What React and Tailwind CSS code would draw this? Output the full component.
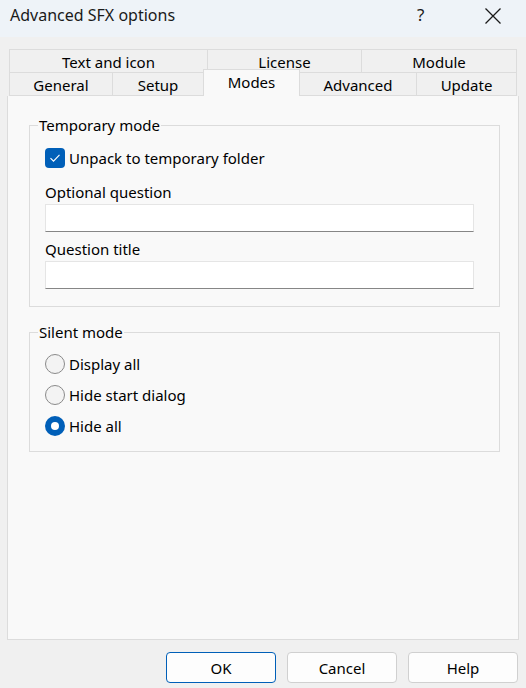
import React from 'react';

const font = { fontFamily: '"Noto Sans", "Open Sans", sans-serif' };

const Tab = ({ label, w, active }) => (
  <div
    className={`flex items-center justify-center border border-[#dcdcdc] -ml-[1px] first:ml-0 ${
      active
        ? 'relative z-10 h-[27px] -mt-[2px] bg-[#f9f9f9] border-b-0 pb-[2px]'
        : 'h-[24px] bg-[#f0f0f0] pt-[1px]'
    } ${w}`}
  >
    {label}
  </div>
);

const Radio = ({ label, checked }) => (
  <div className="flex items-center h-[20px] gap-[4px]">
    {checked ? (
      <span className="w-[20px] h-[20px] rounded-full bg-[#005fb8] flex items-center justify-center">
        <span className="w-[8px] h-[8px] rounded-full bg-white" />
      </span>
    ) : (
      <span className="w-[20px] h-[20px] rounded-full border border-[#8a8a8a] bg-[#f3f3f3]" />
    )}
    <span>{label}</span>
  </div>
);

const Field = () => (
  <div className="h-[28px] w-[429px] bg-white border border-[#e5e5e5] border-b-[#868686]" />
);

export default function App() {
  return (
    <div style={font} className="w-[526px] h-[688px] bg-[#f0f0f0] flex flex-col text-[15px] leading-[20px] text-black overflow-hidden">
      {/* title bar */}
      <div className="h-[37px] bg-[#eef3f8] flex items-start pt-[4px] pl-[10px] text-[16px] leading-[22px] text-[#1a1a1a]">
        <span className="flex-1">Advanced SFX options</span>
        <span className="w-[12px] mr-[55px] text-[17px]">?</span>
        <svg width="18" height="18" viewBox="0 0 18 18" className="mr-[24px] mt-[3px]">
          <path d="M1.5 1.5 L16.5 16.5 M16.5 1.5 L1.5 16.5" stroke="#1a1a1a" strokeWidth="1.3" fill="none" />
        </svg>
      </div>

      {/* tabs */}
      <div className="mt-[12px] pl-[9px] flex flex-col">
        <div className="flex">
          <Tab label="Text and icon" w="w-[199px]" />
          <Tab label="License" w="w-[155px]" />
          <Tab label="Module" w="w-[156px]" />
        </div>
        <div className="flex items-end h-[24px] -mt-[1px]">
          <Tab label="General" w="w-[104px]" />
          <Tab label="Setup" w="w-[92px]" />
          <Tab label="Modes" w="w-[97px]" active />
          <Tab label="Advanced" w="w-[118px]" />
          <Tab label="Update" w="w-[101px]" />
        </div>
      </div>

      {/* panel */}
      <div className="ml-[7px] w-[512px] h-[544px] bg-[#f9f9f9] border border-[#dcdcdc] border-t-0 pt-[19px] pl-[21px]">
        <fieldset className="w-[471px] h-[192px] border border-[#dcdcdc] pl-[15px] pt-0">
          <legend className="ml-[-7px] px-[1px] leading-[20px]">Temporary mode</legend>
          <div className="flex items-center h-[20px] gap-[4px] mt-[13px]">
            <span className="w-[20px] h-[20px] rounded-[4px] bg-[#005fb8] flex items-center justify-center">
              <svg width="12" height="10" viewBox="0 0 12 10">
                <path d="M1.5 5.2 L4.5 8.2 L10.5 1.8" stroke="white" strokeWidth="1.1" fill="none" />
              </svg>
            </span>
            <span>Unpack to temporary folder</span>
          </div>
          <div className="mt-[14px]">Optional question</div>
          <div className="mt-[2px]"><Field /></div>
          <div className="mt-[7px]">Question title</div>
          <div className="mt-[2px]"><Field /></div>
        </fieldset>

        <fieldset className="mt-[15px] w-[471px] h-[130px] border border-[#dcdcdc] pl-[15px]">
          <legend className="ml-[-7px] px-[1px] leading-[20px]">Silent mode</legend>
          <div className="flex flex-col gap-[11px] mt-[12px]">
            <Radio label="Display all" />
            <Radio label="Hide start dialog" />
            <Radio label="Hide all" checked />
          </div>
        </fieldset>
      </div>

      {/* buttons */}
      <div className="flex justify-end gap-[11px] mt-[12px] pr-[8px]">
        <button className="w-[110px] h-[31px] rounded-[4px] bg-[#fdfdfd] border border-[#005fb8]">OK</button>
        <button className="w-[110px] h-[31px] rounded-[4px] bg-[#fdfdfd] border border-[#d0d0d0]">Cancel</button>
        <button className="w-[110px] h-[31px] rounded-[4px] bg-[#fdfdfd] border border-[#d0d0d0]">Help</button>
      </div>
    </div>
  );
}
